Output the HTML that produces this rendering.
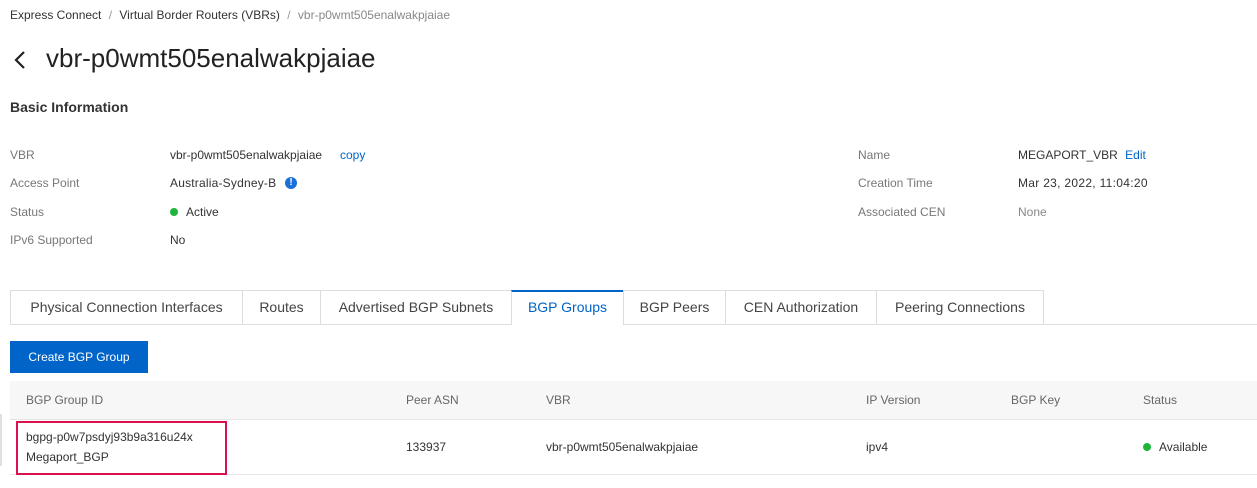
<!DOCTYPE html>
<html><head><style>
body{margin:0;width:1257px;height:488px;background:#fff;font-family:"Liberation Sans",sans-serif;color:#333;position:relative;overflow:hidden}
.a{position:absolute;white-space:nowrap}
.lbl{font-size:12px;color:#777}
.val{font-size:12px;color:#333}
.tab{position:absolute;top:290px;height:34px;box-sizing:border-box;border:1px solid #ddd;border-bottom:none;background:#fff;font-size:14px;color:#444;text-align:center;line-height:33px}
.th{font-size:12px;color:#666;top:393px}
.td{font-size:12px;color:#333}
</style></head><body>
<div class="a" style="left:10px;top:8px;font-size:12px;color:#333">Express Connect <span style="color:#999;margin:0 4px">/</span> Virtual Border Routers (VBRs) <span style="color:#999;margin:0 4px">/</span> <span style="color:#888">vbr-p0wmt505enalwakpjaiae</span></div>
<svg class="a" style="left:12px;top:50px" width="16" height="20" viewBox="0 0 16 20"><path d="M12 2 L4 10 L12 18" stroke="#222" stroke-width="2.2" fill="none"/></svg>
<div class="a" style="left:46px;top:43px;font-size:26px;color:#222">vbr-p0wmt505enalwakpjaiae</div>
<div class="a" style="left:10px;top:99px;font-size:14px;font-weight:bold;color:#333">Basic Information</div>

<div class="a lbl" style="left:10px;top:148px">VBR</div>
<div class="a lbl" style="left:10px;top:176px">Access Point</div>
<div class="a lbl" style="left:10px;top:205px">Status</div>
<div class="a lbl" style="left:10px;top:233px">IPv6 Supported</div>
<div class="a val" style="left:170px;top:148px">vbr-p0wmt505enalwakpjaiae</div>
<div class="a val" style="left:340px;top:148px;color:#0064c8">copy</div>
<div class="a val" style="left:170px;top:176px;letter-spacing:0.2px">Australia-Sydney-B</div>
<div class="a" style="left:285px;top:177px;width:12px;height:12px;border-radius:50%;background:#1a6fd8;color:#fff;font-size:10px;font-weight:bold;text-align:center;line-height:12px">!</div>
<div class="a" style="left:170px;top:208px;width:8px;height:8px;border-radius:50%;background:#1eb53a"></div>
<div class="a val" style="left:186px;top:205px">Active</div>
<div class="a val" style="left:170px;top:233px">No</div>
<div class="a lbl" style="left:858px;top:148px">Name</div>
<div class="a lbl" style="left:858px;top:176px">Creation Time</div>
<div class="a lbl" style="left:858px;top:205px">Associated CEN</div>
<div class="a val" style="left:1018px;top:148px">MEGAPORT_VBR <span style="color:#0064c8;margin-left:4px">Edit</span></div>
<div class="a val" style="left:1018px;top:176px;letter-spacing:0.3px">Mar 23, 2022, 11:04:20</div>
<div class="a val" style="left:1018px;top:205px;color:#888">None</div>

<div class="a" style="left:10px;top:324px;width:1247px;height:1px;background:#ddd"></div>
<div class="tab" style="left:10px;width:233px">Physical Connection Interfaces</div>
<div class="tab" style="left:242px;width:79px">Routes</div>
<div class="tab" style="left:320px;width:192px">Advertised BGP Subnets</div>
<div class="tab" style="left:511px;width:113px;height:35px;border-top:2px solid #0064c8;color:#0064c8;line-height:31px">BGP Groups</div>
<div class="tab" style="left:623px;width:103px">BGP Peers</div>
<div class="tab" style="left:725px;width:152px">CEN Authorization</div>
<div class="tab" style="left:876px;width:168px">Peering Connections</div>

<div class="a" style="left:10px;top:341px;width:138px;height:32px;background:#0064c8;color:#fff;font-size:12px;text-align:center;line-height:32px">Create BGP Group</div>

<div class="a" style="left:10px;top:381px;width:1247px;height:38px;background:#f7f7f7;border-bottom:1px solid #e5e5e5"></div>
<div class="a th" style="left:26px">BGP Group ID</div>
<div class="a th" style="left:406px">Peer ASN</div>
<div class="a th" style="left:546px">VBR</div>
<div class="a th" style="left:866px">IP Version</div>
<div class="a th" style="left:1011px">BGP Key</div>
<div class="a th" style="left:1143px">Status</div>
<div class="a" style="left:10px;top:474px;width:1247px;height:1px;background:#e5e5e5"></div>
<div class="a" style="left:0px;top:414px;width:2px;height:52px;background:#e0e0e0"></div>
<div class="a" style="left:16px;top:421px;width:207px;height:50px;border:2px solid #d9124f"></div>
<div class="a td" style="left:26px;top:430px">bgpg-p0w7psdyj93b9a316u24x</div>
<div class="a td" style="left:26px;top:450px">Megaport_BGP</div>
<div class="a td" style="left:406px;top:440px">133937</div>
<div class="a td" style="left:546px;top:440px">vbr-p0wmt505enalwakpjaiae</div>
<div class="a td" style="left:866px;top:440px">ipv4</div>
<div class="a" style="left:1143px;top:443px;width:8px;height:8px;border-radius:50%;background:#1eb53a"></div>
<div class="a td" style="left:1159px;top:440px">Available</div>
</body></html>
